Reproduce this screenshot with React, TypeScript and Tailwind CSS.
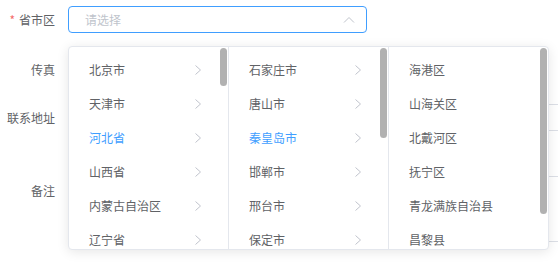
import React from "react";

interface Column {
  items: string[];
  active?: string;
  arrows: boolean;
  thumb: string;
}

const columns: Column[] = [
  {
    items: ["北京市", "天津市", "河北省", "山西省", "内蒙古自治区", "辽宁省"],
    active: "河北省",
    arrows: true,
    thumb: "h-[38px]",
  },
  {
    items: ["石家庄市", "唐山市", "秦皇岛市", "邯郸市", "邢台市", "保定市"],
    active: "秦皇岛市",
    arrows: true,
    thumb: "h-[90px]",
  },
  {
    items: ["海港区", "山海关区", "北戴河区", "抚宁区", "青龙满族自治县", "昌黎县"],
    arrows: false,
    thumb: "h-[166px]",
  },
];

function ChevronRight() {
  return (
    <svg width="8" height="12" viewBox="0 0 8 12" fill="none">
      <path d="M1.5 1.5 L6.5 6 L1.5 10.5" stroke="#c0c4cc" strokeWidth="1" />
    </svg>
  );
}

function FormLabel({ children, required }: { children: React.ReactNode; required?: boolean }) {
  return (
    <div className="w-[68px] shrink-0 pr-[13px] text-right text-[12px] text-[#606266]">
      {required && <span className="mr-[4px] text-[#f56c6c]">*</span>}
      {children}
    </div>
  );
}

export default function App() {
  return (
    <div
      className="relative h-[262px] w-[558px] overflow-hidden bg-white"
      style={{ fontFamily: '"Noto Sans CJK SC", "Noto Sans", sans-serif' }}
    >
      {/* Form rows */}
      <div className="flex items-center pt-[6px]">
        <FormLabel required>省市区</FormLabel>
        <div className="flex h-[27px] w-[299px] items-center justify-between rounded-[4px] border border-[#409eff] pl-[16px] pr-[11px]">
          <span className="text-[12px] text-[#c0c4cc]">请选择</span>
          <svg width="12" height="8" viewBox="0 0 12 8" fill="none">
            <path d="M1 6.5 L6 1.5 L11 6.5" stroke="#c0c4cc" strokeWidth="1" />
          </svg>
        </div>
      </div>
      <div className="mt-[23px] flex items-center">
        <FormLabel>传真</FormLabel>
        <div className="h-[27px] w-[299px] rounded-[4px] border border-[#dcdfe6]" />
      </div>
      <div className="mt-[21px] flex items-center">
        <FormLabel>联系地址</FormLabel>
        <div className="h-[27px] w-[520px] shrink-0 rounded-[4px] border border-[#dcdfe6]" />
      </div>
      <div className="mt-[45px] flex items-start">
        <div className="leading-[30px]">
          <FormLabel>备注</FormLabel>
        </div>
        <div className="h-[66px] w-[520px] shrink-0 rounded-[4px] border border-[#dcdfe6]" />
      </div>

      {/* Cascader dropdown */}
      <div className="absolute left-[68px] top-[46px] flex h-[204px] w-[481px] overflow-hidden rounded-[4px] border border-[#e4e7ed] bg-white shadow-[0_2px_12px_rgba(0,0,0,0.1)]">
        {columns.map((col, ci) => (
          <div
            key={ci}
            className={
              ci < 2
                ? "relative h-full w-[160px] shrink-0 border-r border-[#e4e7ed]"
                : "relative h-full flex-1"
            }
          >
            <ul className="py-[6px]">
              {col.items.map((item) => (
                <li
                  key={item}
                  className={
                    item === col.active
                      ? "flex h-[34px] items-center justify-between pl-[20px] pr-[26px] text-[12px] text-[#409eff]"
                      : "flex h-[34px] items-center justify-between pl-[20px] pr-[26px] text-[12px] text-[#606266]"
                  }
                >
                  <span>{item}</span>
                  {col.arrows && <ChevronRight />}
                </li>
              ))}
            </ul>
            <div
              className={`absolute right-[1px] top-[1px] w-[7px] rounded-full bg-[#b1b1b1] ${col.thumb}`}
            />
          </div>
        ))}
      </div>
    </div>
  );
}
